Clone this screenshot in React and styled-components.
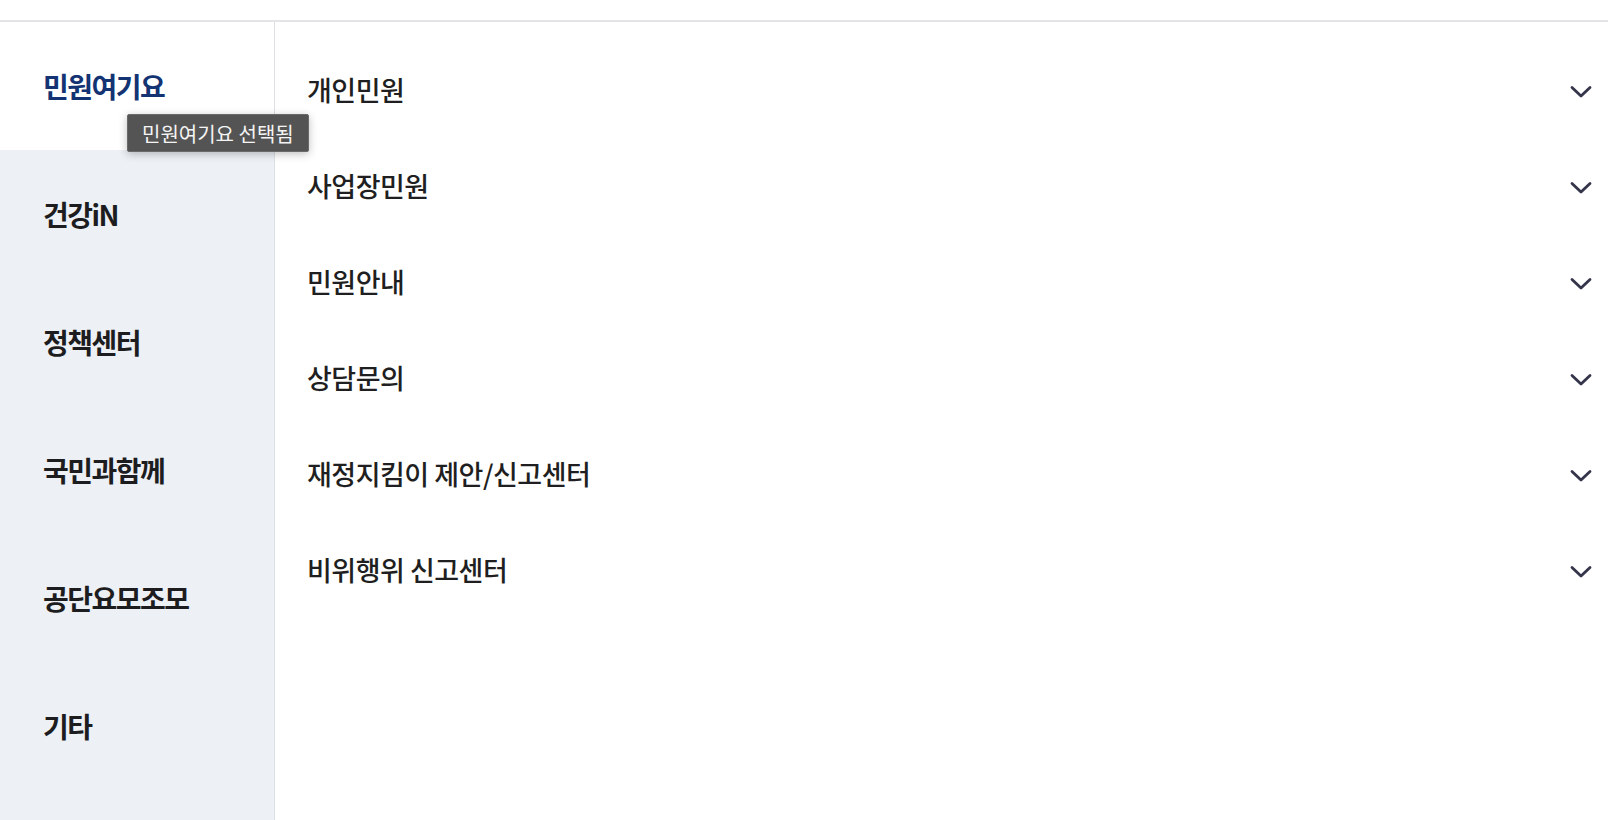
import React from 'react';
import styled, { createGlobalStyle } from 'styled-components';

const GlobalStyle = createGlobalStyle`
  html, body {
    margin: 0;
    padding: 0;
    background: #ffffff;
    font-family: "Noto Sans CJK KR", "Noto Sans", sans-serif;
  }
`;

const Page = styled.div`
  display: flex;
  flex-direction: column;
  height: 820px;
  overflow: hidden;
`;

const TopBar = styled.div`
  height: 20px;
  border-bottom: 2px solid #e4e4e6;
  flex-shrink: 0;
`;

const Body = styled.div`
  display: flex;
  flex: 1;
`;

const Sidebar = styled.ul`
  list-style: none;
  margin: 0;
  padding: 0;
  width: 274px;
  flex-shrink: 0;
  background: #edf0f5;
  border-right: 1px solid #dcdfe4;
`;

const SideItem = styled.li`
  position: relative;
  display: flex;
  align-items: center;
  height: 128px;
  padding-left: 43px;
  background: ${({ $active }) => ($active ? '#ffffff' : 'transparent')};
  color: ${({ $active }) => ($active ? '#133373' : '#1d1d1f')};
  font-size: 28px;
  font-weight: 700;
  letter-spacing: -1.5px;
  cursor: pointer;
`;

const Tooltip = styled.span`
  position: absolute;
  left: 127px;
  top: 92px;
  padding: 0 14px;
  height: 36px;
  display: flex;
  align-items: center;
  background: #545454;
  border: 1px solid #6a6a6a;
  border-radius: 2px;
  box-shadow: 0 2px 8px rgba(0, 0, 0, 0.25);
  color: #f4f4f4;
  font-size: 20px;
  font-weight: 400;
  letter-spacing: 0;
  white-space: nowrap;
  z-index: 2;
`;

const Content = styled.ul`
  list-style: none;
  margin: 0;
  padding: 19px 15px 0 32px;
  flex: 1;
`;

const Row = styled.li`
  display: flex;
  align-items: center;
  justify-content: space-between;
  height: 96px;
  color: #1f1f22;
  font-size: 27px;
  font-weight: 500;
  letter-spacing: -0.5px;
  cursor: pointer;
`;

const ChevronSvg = styled.svg`
  flex-shrink: 0;
  margin-top: 3px;
`;

const Chevron = () => (
  <ChevronSvg width="24" height="18" viewBox="0 0 24 18" fill="none">
    <path d="M3 5.5 L12 14 L21 5.5" stroke="#34344a" strokeWidth="2.8" strokeLinecap="round" strokeLinejoin="round" />
  </ChevronSvg>
);

const sideMenus = ['민원여기요', '건강iN', '정책센터', '국민과함께', '공단요모조모', '기타'];
const subMenus = ['개인민원', '사업장민원', '민원안내', '상담문의', '재정지킴이 제안/신고센터', '비위행위 신고센터'];

export default function App() {
  const active = 0;
  return (
    <>
      <GlobalStyle />
      <Page>
        <TopBar />
        <Body>
          <Sidebar>
            {sideMenus.map((m, i) => (
              <SideItem key={m} $active={i === active}>
                {m}
                {i === active && <Tooltip>{m} 선택됨</Tooltip>}
              </SideItem>
            ))}
          </Sidebar>
          <Content>
            {subMenus.map((s) => (
              <Row key={s}>
                {s}
                <Chevron />
              </Row>
            ))}
          </Content>
        </Body>
      </Page>
    </>
  );
}
